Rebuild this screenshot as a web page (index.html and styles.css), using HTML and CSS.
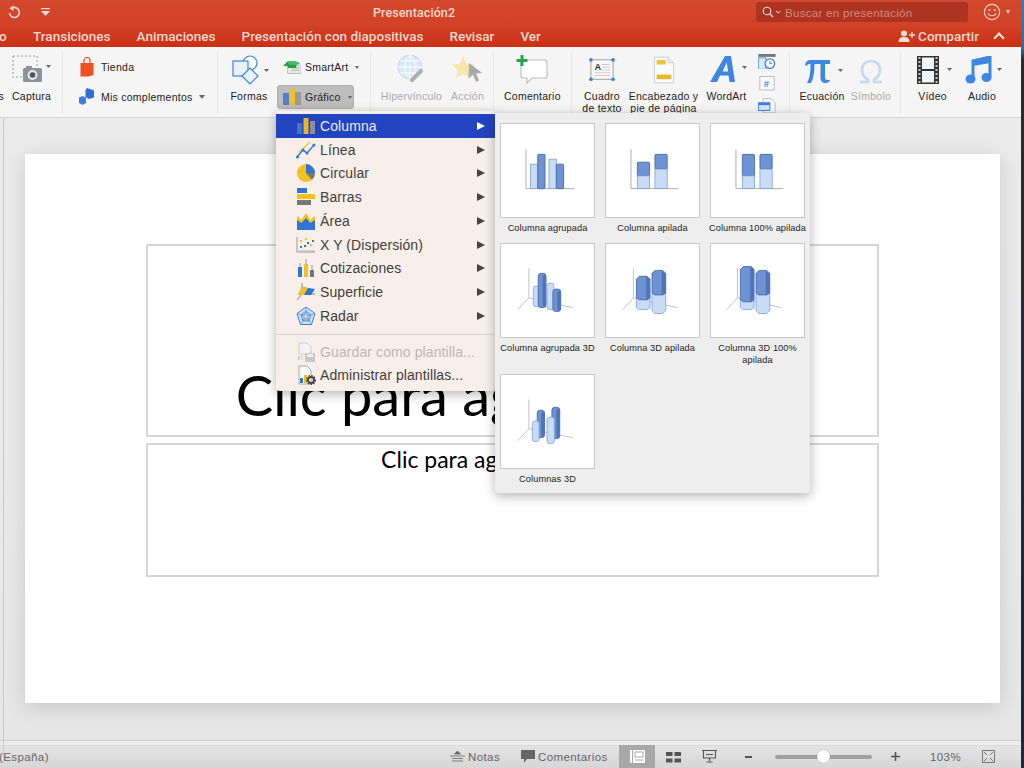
FILE: index.html
```html
<!DOCTYPE html>
<html lang="es">
<head>
<meta charset="utf-8">
<title>Presentación2</title>
<link rel="stylesheet" href="styles.css">
</head>
<body>
<div class="screen">
<div class="window">
  <header class="titlebar">
    <svg class="undo" viewBox="0 0 14 14" width="14" height="14"><path d="M4.200 3.600A5 5 0 1 1 2.400 8" fill="none" stroke="#f5d8d0" stroke-width="1.700"/><path d="M6.600 0.400V6L2.400 3.200z" fill="#f5d8d0"/></svg>
    <svg class="qat" viewBox="0 0 9 8" width="9" height="8"><path d="M0 0h9v1.200H0z M0 3h9L4.500 8z" fill="#f5d8d0"/></svg>
    <div class="doc-title">Presentación2</div>
    <div class="search">
      <svg viewBox="0 0 20 12" width="20" height="12"><circle cx="5" cy="5" r="3.800" fill="none" stroke="#f6e3dd" stroke-width="1.100"/><path d="M8 8l3 3" stroke="#f6e3dd" stroke-width="1.200"/><path d="M14 5l2.200 2 2.200-2" fill="none" stroke="#f6e3dd"/></svg>
      <span>Buscar en presentación</span>
    </div>
    <svg class="smile" viewBox="0 0 18 18" width="18" height="18"><circle cx="9" cy="9" r="7.600" fill="none" stroke="#f3cfc5" stroke-width="1.200"/><circle cx="6.400" cy="7" r="1" fill="#f3cfc5"/><circle cx="11.600" cy="7" r="1" fill="#f3cfc5"/><path d="M5 10.400c1 3.200 7 3.200 8 0" fill="none" stroke="#f3cfc5" stroke-width="1.100"/></svg>
    <span class="tri light"></span>
  </header>

  <nav class="tabs">
    <span class="tab-cut">o</span>
    <span class="tab">Transiciones</span>
    <span class="tab">Animaciones</span>
    <span class="tab">Presentación con diapositivas</span>
    <span class="tab">Revisar</span>
    <span class="tab">Ver</span>
    <div class="tab-end">
      <span class="share">
        <svg viewBox="0 0 18 12" width="18" height="12"><circle cx="6" cy="3.400" r="3" fill="#f6dcd4"/><path d="M0.500 12c0-4 2.400-5 5.500-5s5.500 1 5.500 5z" fill="#f6dcd4"/><path d="M11 5h6M14 2v6" stroke="#f6dcd4" stroke-width="1.400"/></svg>
        Compartir
      </span>
      <span class="chevron"></span>
    </div>
  </nav>

  <section class="ribbon">
    <div class="group g1">
      <div class="tool cut"><div class="ic"></div><span>s</span></div>
      <div class="tool w39">
        <div class="ic">
          <svg viewBox="0 0 40 30" width="40" height="30"><rect x="1" y="1" width="24" height="21" fill="none" stroke="#9a9a9a" stroke-dasharray="2 2"/><rect x="11" y="13" width="19" height="14" rx="1.500" fill="#8d9199"/><rect x="14" y="11" width="6" height="3" fill="#8d9199"/><circle cx="20.500" cy="20" r="5" fill="#e4e6ea"/><circle cx="20.500" cy="20" r="2.800" fill="#50545c"/><path d="M34 10h5l-2.500 3z" fill="#666"/></svg>
        </div>
        <span>Captura</span>
      </div>
    </div>

    <div class="group g2">
      <div class="rows">
        <div class="row">
          <svg class="r-ic" viewBox="0 0 16 20" width="16" height="20"><path d="M1.500 6h13v12l-5 1.500H1.500z" fill="#f04e23"/><path d="M5 7V3.500a3 3 0 0 1 6 0V7" fill="none" stroke="#f04e23" stroke-width="1.200"/></svg>
          <span>Tienda</span>
        </div>
        <div class="row">
          <svg class="r-ic" viewBox="0 0 16 18" width="16" height="18"><path d="M8 0l7 2.500v7L10 11 6.500 9V2z" fill="#2f6fd0"/><path d="M0 9.500L3.500 8l3.500 1.500V15l-3.500 2L0 15z" fill="#3b80e0"/></svg>
          <span>Mis complementos</span>
          <span class="tri"></span>
        </div>
      </div>
    </div>

    <div class="group g3">
      <div class="tool w38">
        <div class="ic">
          <svg viewBox="-4 0 42 30" width="42" height="30"><circle cx="18" cy="8" r="7" fill="#fff" stroke="#3c85e0" stroke-width="1.200"/><rect x="1" y="6" width="15" height="15" fill="#eaf2fd" stroke="#3c85e0" stroke-width="1.200"/><path d="M18 13l8 8-8 8-8-8z" fill="#eaf2fd" stroke="#3c85e0" stroke-width="1.200"/><path d="M32 14h5l-2.500 3z" fill="#666"/></svg>
        </div>
        <span>Formas</span>
      </div>
      <div class="rows r3">
        <div class="row small">
          <svg class="r-ic" viewBox="0 0 19 14" width="18" height="14"><rect x="5" y="5" width="14" height="9" fill="#e9e9e9" stroke="#aaa" stroke-width=".7"/><path d="M9 8h8M9 10.500h8" stroke="#999" stroke-width=".7"/><path d="M0 6l5-5h8l5 2-4 2v3H5V6z" fill="#22a247"/><path d="M5 1h8l5 2-4 1.500H6z" fill="#4cbc6a"/></svg>
          <span>SmartArt</span>
          <span class="tri gap3"></span>
        </div>
        <div class="row small pressed">
          <svg class="r-ic" viewBox="0 0 18 16" width="18" height="16"><rect x="0" y="4" width="6.500" height="12" rx="1" fill="#4a82cc"/><rect x="6" y="0" width="6" height="16" fill="#f0c02a"/><rect x="12" y="3" width="6" height="13" rx="1" fill="#999"/></svg>
          <span>Gráfico</span>
          <span class="tri gap3"></span>
        </div>
      </div>
    </div>

    <div class="group g4">
      <div class="tool off w63">
        <div class="ic">
          <svg viewBox="0 0 32 30" width="32" height="30"><circle cx="14" cy="12" r="12" fill="#dbe7f8" stroke="#c5d7ef"/><path d="M14 0v24M2 12h24M4 6h20M4 18h20M14 0c-7 6-7 18 0 24M14 0c7 6 7 18 0 24" fill="none" stroke="#fff"/><path d="M16 25l4-4M21 20l4-4" stroke="#aeaeae" stroke-width="4" stroke-linecap="round"/></svg>
        </div>
        <span>Hipervínculo</span>
      </div>
      <div class="tool off w33">
        <div class="ic">
          <svg viewBox="0 0 32 30" width="32" height="30"><path d="M11 1l3.400 7.600 8 .8-6 5.400 1.700 8L11 19l-7 4 1.700-8-6-5.400 8-.8z" fill="#f8e7a8"/><path d="M17 8l13 10-6 .5 3 7-3 1.300-3-7-4.500 4z" fill="#a9a9a9"/></svg>
        </div>
        <span>Acción</span>
      </div>
    </div>

    <div class="group g5">
      <div class="tool">
        <div class="ic">
          <svg viewBox="0 0 32 30" width="32" height="30"><path d="M5 5h24a2 2 0 0 1 2 2v14a2 2 0 0 1-2 2H16l-5 5v-5H7a2 2 0 0 1-2-2z" fill="#fff" stroke="#bbb" stroke-width="1.100"/><path d="M6 0v11M0.500 5.500h11" stroke="#24a84a" stroke-width="3"/></svg>
        </div>
        <span>Comentario</span>
      </div>
    </div>

    <div class="group g6">
      <div class="tool w38">
        <div class="ic">
          <svg class="lower" viewBox="0 0 28 26" width="28" height="24"><rect x="2" y="2" width="24" height="21" fill="#fafafa" stroke="#9a9a9a"/><circle cx="2" cy="2" r="2" fill="#3a82e0"/><circle cx="26" cy="2" r="2" fill="#3a82e0"/><circle cx="2" cy="23" r="2" fill="#3a82e0"/><circle cx="26" cy="23" r="2" fill="#3a82e0"/><text x="6" y="13" class="svg-a">A</text><path d="M14 7h9M14 10h9M14 13h9M6 16h17M6 19h17" stroke="#bbb" stroke-width=".8"/></svg>
        </div>
        <span>Cuadro<br>de texto</span>
      </div>
      <div class="tool w69">
        <div class="ic">
          <svg viewBox="0 0 24 30" width="22" height="30"><path d="M1.500 1h15l6 6v22h-21z" fill="#fbfbfb" stroke="#c9c9c9"/><path d="M16.500 1v6h6" fill="#eee" stroke="#c9c9c9"/><rect x="4" y="4" width="10" height="5" fill="#f0c33c"/><rect x="4" y="20" width="16" height="5" fill="#e7b92f"/></svg>
        </div>
        <span>Encabezado y<br>pie de página</span>
      </div>
      <div class="tool w41">
        <div class="ic">
          <svg viewBox="-3 0 44 28" width="44" height="28"><path d="M2 27L17 1h6l4 26h-5.500l-1-6.500h-8.500L9 27z M14.500 16.500h5.500l-1.300-9z" fill="#3d86e4" fill-rule="evenodd"/><path d="M34 11h5l-2.500 3z" fill="#666"/></svg>
        </div>
        <span>WordArt</span>
      </div>
      <div class="minis">
        <svg viewBox="0 0 18 16" width="18" height="16"><rect width="18" height="3" fill="#777"/><path d="M0 4h8v12H0z" fill="#dbe8fa" stroke="#3a82e0" stroke-width=".8"/><circle cx="12" cy="10" r="5" fill="#fff" stroke="#3a82e0" stroke-width="1.300"/><path d="M12 7v3h2.500" fill="none" stroke="#3a82e0"/></svg>
        <svg viewBox="0 0 16 15" width="16" height="15"><rect x=".5" y=".5" width="15" height="14" fill="#fafafa" stroke="#bbb"/><text x="4.500" y="11" class="svg-hash">#</text></svg>
        <svg viewBox="0 0 18 16" width="18" height="16"><path d="M5 .5h8l4.500 4.500v10.500H5z" fill="#fafafa" stroke="#bbb"/><rect x="0" y="5" width="12" height="8" fill="#dbe8fa" stroke="#3a82e0"/><rect x="0" y="5" width="12" height="2.500" fill="#3a82e0"/></svg>
      </div>
    </div>

    <div class="group g7">
      <div class="tool w44">
        <div class="ic">
          <svg class="lower" viewBox="-2 0 44 26" width="44" height="26"><path d="M3 7C4 3 6 2 9 2h19v4h-5v13c0 2 .5 3 2.500 3H28c-.5 2-2 3-4.500 3-3 0-5-1.500-5-5V6h-6c0 8-1 15-3.500 19H5c3-5 3.500-12 3.500-19C6.500 6 5 6.500 4.500 8z" fill="#3d86e4"/><path d="M36 11h5l-2.500 3z" fill="#666"/></svg>
        </div>
        <span>Ecuación</span>
      </div>
      <div class="tool off w40">
        <div class="ic">
          <svg class="lower" viewBox="0 0 26 26" width="26" height="26"><path d="M2 24h8v-2.500C6 19.500 4 16 4 12 4 6.500 8 3 13 3s9 3.500 9 9c0 4-2 7.500-6 9.500V24h8" fill="none" stroke="#c3d8f3" stroke-width="2.600"/></svg>
        </div>
        <span>Símbolo</span>
      </div>
    </div>

    <div class="group g8">
      <div class="tool w41">
        <div class="ic">
          <svg class="up" viewBox="-4 0 42 28" width="42" height="28"><rect x="1" y="0" width="22" height="28" fill="#333"/><rect x="6" y="1.500" width="12" height="11.500" fill="#eef4fd"/><rect x="6" y="15" width="12" height="11.500" fill="#eef4fd"/><path d="M2.500 2h2M2.500 6h2M2.500 10h2M2.500 14h2M2.500 18h2M2.500 22h2M2.500 26h2M19.500 2h2M19.500 6h2M19.500 10h2M19.500 14h2M19.500 18h2M19.500 22h2M19.500 26h2" stroke="#fff" stroke-width="1.500"/><path d="M31 12h5l-2.500 3z" fill="#666"/></svg>
        </div>
        <span>Vídeo</span>
      </div>
      <div class="tool w42">
        <div class="ic">
          <svg class="up" viewBox="-4 0 42 28" width="42" height="28"><path d="M8 21V5L25 1v20" fill="none" stroke="#3d86e4" stroke-width="3"/><path d="M8 5L25 1v6L8 10z" fill="#3d86e4"/><ellipse cx="5.500" cy="23" rx="5" ry="4.500" fill="#3d86e4"/><ellipse cx="21.500" cy="21.500" rx="5" ry="4.500" fill="#3d86e4"/><path d="M32 12h5l-2.500 3z" fill="#666"/></svg>
        </div>
        <span>Audio</span>
      </div>
    </div>
  </section>

  <main class="workspace">
    <div class="slide">
      <div class="ph ph-title">Clic para agregar título</div>
      <div class="ph ph-sub">Clic para agregar subtítulo</div>
    </div>
  </main>

  <footer class="status">
    <span class="lang">(España)</span>
    <span class="st notas">
      <svg viewBox="0 0 15 12" width="15" height="12"><path d="M4.500 3L7.500 0l3 3z M0 5h15M2 7.500h11M2 10h11" fill="#666" stroke="#666" stroke-width=".8"/></svg>
      Notas
    </span>
    <span class="st comm">
      <svg viewBox="0 0 14 13" width="14" height="13"><path d="M0 0h14v9H6l-3 4V9H0z" fill="#666"/></svg>
      Comentarios
    </span>
    <span class="view on"><svg viewBox="0 0 15 13" width="15" height="13"><rect width="15" height="13" rx="1" fill="#fff"/><rect x="2" y="0" width="1" height="13" fill="#a8a8a8"/><rect x="5" y="2" width="8" height="5" fill="none" stroke="#a8a8a8"/><rect x="5" y="9.500" width="8" height="1" fill="#a8a8a8"/></svg></span>
    <span class="view"><svg viewBox="0 0 15 12" width="15" height="12"><path d="M0 1h6.500v4H0zM8.500 1H15v4H8.500zM0 7.500h6.500v4H0zM8.500 7.500H15v4H8.500z" fill="#555"/></svg></span>
    <span class="view"><svg viewBox="0 0 15 13" width="15" height="13"><path d="M0 .5h15M1.500 1v7h12V1M7.500 8v3M4.500 12h6M4 4.500h7" fill="none" stroke="#555" stroke-width="1.100"/></svg></span>
    <span class="zoom-minus"></span>
    <span class="slider"><span class="thumb"></span></span>
    <svg class="zoom-plus" viewBox="0 0 9 9" width="9" height="9"><path d="M4.500 0v9M0 4.500h9" stroke="#555" stroke-width="1.600"/></svg>
    <span class="pct">103%</span>
    <svg class="fit" viewBox="0 0 13 13" width="13" height="13"><rect x=".5" y=".5" width="12" height="12" fill="none" stroke="#777"/><path d="M2 2l3 3M11 2L8 5M2 11l3-3M11 11L8 8" stroke="#777"/></svg>
  </footer>

  <div class="menu">
    <div class="item sel"><svg viewBox="0 0 18 16" width="18" height="16"><rect y="5" width="5" height="11" fill="#3f77c9"/><rect x="6.500" width="5" height="16" fill="#e7b62a"/><rect x="13" y="3" width="5" height="13" fill="#8a8f99"/></svg><span>Columna</span><i></i></div>
    <div class="item"><svg viewBox="0 0 20 18" width="20" height="18"><path d="M1 16l6-7 4 3 7-8" fill="none" stroke="#2f76d2" stroke-width="1.300"/><path d="M3 11l9-8 2-2" fill="none" stroke="#f5c022" stroke-width="1.300"/><circle cx="1.500" cy="16" r="1.500" fill="#2f76d2"/><circle cx="7" cy="9" r="1.500" fill="#2f76d2"/><circle cx="11" cy="12" r="1.500" fill="#2f76d2"/><circle cx="18" cy="4" r="1.500" fill="#2f76d2"/></svg><span>Línea</span><i></i></div>
    <div class="item"><svg viewBox="0 0 20 18" width="20" height="18"><circle cx="10" cy="9" r="9" fill="#f5c022"/><path d="M10 9V0a9 9 0 0 1 9 9z" fill="#2f76d2"/><path d="M10 9h9a9 9 0 0 1-3 6.700z" fill="#777"/></svg><span>Circular</span><i></i></div>
    <div class="item"><svg viewBox="0 0 20 18" width="20" height="18"><rect x="1" y="0" width="10" height="5" fill="#2f76d2"/><rect x="1" y="6" width="18" height="5" fill="#f5c022"/><rect x="1" y="12" width="14" height="5" fill="#777"/></svg><span>Barras</span><i></i></div>
    <div class="item"><svg viewBox="0 0 20 18" width="20" height="18"><path d="M1 4l4.500 4L10 1l4.500 7L19 4v14H1z" fill="#f5c022"/><path d="M1 8l4.500 3L10 6l4.500 5L19 8v10H1z" fill="#2f76d2"/></svg><span>Área</span><i></i></div>
    <div class="item"><svg viewBox="0 0 20 18" width="20" height="18"><path d="M1 1v15h18" fill="none" stroke="#999"/><path d="M3 15h16" stroke="#bbb"/><g fill="#f5c022"><rect x="4" y="4" width="2" height="2"/><rect x="9" y="2" width="2" height="2"/><rect x="14" y="8" width="2" height="2"/></g><g fill="#2f76d2"><rect x="4" y="10" width="2" height="2"/><rect x="11" y="6" width="2" height="2"/><rect x="16" y="4" width="2" height="2"/><rect x="8" y="9" width="2" height="2"/></g></svg><span>X Y (Dispersión)</span><i></i></div>
    <div class="item"><svg viewBox="0 0 20 18" width="20" height="18"><rect x="2" y="8" width="4" height="10" fill="#2f76d2"/><path d="M4 4v4" stroke="#999"/><rect x="8" y="5" width="4" height="13" fill="#f5c022"/><path d="M10 0v5" stroke="#999"/><rect x="14" y="11" width="4" height="7" fill="#777"/><path d="M16 6v5" stroke="#999"/></svg><span>Cotizaciones</span><i></i></div>
    <div class="item"><svg viewBox="0 0 20 18" width="20" height="18"><path d="M6 0v11L1 17" fill="none" stroke="#888"/><path d="M6 11h13" stroke="#888"/><path d="M6 4l13 2-4 6H2z" fill="#2f76d2"/><path d="M6 4l6 1-4 7H2z" fill="#f5c022"/></svg><span>Superficie</span><i></i></div>
    <div class="item"><svg viewBox="0 0 20 18" width="20" height="18"><path d="M10 0l9 6.500-3.500 11h-11L1 6.500z" fill="#cfe0f6" stroke="#3f7fd4"/><path d="M10 4l5 4-2 6H7L5 8z" fill="#9bbfee" stroke="#3f7fd4" stroke-width=".7"/><path d="M10 0v9M1 6.500L10 9l9-2.500M4.500 17.500L10 9l5.500 8.500" fill="none" stroke="#3f7fd4" stroke-width=".6"/><path d="M10 7l2.500 3.500h-5z" fill="#e9d9a5"/></svg><span>Radar</span><i></i></div>
    <div class="sep"></div>
    <div class="item dim"><svg viewBox="0 0 20 20" width="20" height="20"><path d="M3 1h8l4 4v7H3z" fill="#f3f3f3" stroke="#ccc"/><rect x="9" y="11" width="10" height="9" fill="#c9c9c9"/><rect x="11" y="12" width="6" height="3" fill="#eee"/><rect x="2" y="14" width="2" height="4" fill="#bcd2ee"/><rect x="5" y="12" width="2" height="6" fill="#f3e1a5"/></svg><span>Guardar como plantilla...</span></div>
    <div class="item"><svg viewBox="0 0 20 20" width="20" height="20"><path d="M3 1h8l4 4v14H3z" fill="#fbfbfb" stroke="#aaa"/><rect x="4" y="13" width="3" height="5" fill="#2f76d2"/><rect x="8" y="10" width="3" height="8" fill="#f5c022"/><circle cx="15" cy="15" r="3" fill="none" stroke="#444" stroke-width="2"/><circle cx="15" cy="15" r="4.500" fill="none" stroke="#444" stroke-width="1.200" stroke-dasharray="1.500 1.500"/></svg><span>Administrar plantillas...</span></div>
  </div>

  <div class="gallery">
    <figure class="cell">
      <svg class="thumbnail" viewBox="0 0 95 95">
        <path class="ax" d="M25.500 26v40M25.500 66H75"/>
        <rect class="lt" x="30" y="41" width="7.500" height="25"/><rect class="dk" x="37.500" y="31" width="7.500" height="35" rx="1"/>
        <rect class="lt" x="49" y="36" width="7.500" height="30"/><rect class="dk" x="56.500" y="41" width="7.500" height="25" rx="1"/>
      </svg>
      <figcaption>Columna agrupada</figcaption>
    </figure>
    <figure class="cell">
      <svg class="thumbnail" viewBox="0 0 95 95">
        <path class="ax" d="M25.500 26v40M25.500 66H74"/>
        <rect class="dk" x="32" y="39" width="12.500" height="14" rx="1"/><rect class="lt" x="32" y="53" width="12.500" height="13"/>
        <rect class="dk" x="50" y="31" width="12.500" height="15" rx="1"/><rect class="lt" x="50" y="46" width="12.500" height="20"/>
      </svg>
      <figcaption>Columna apilada</figcaption>
    </figure>
    <figure class="cell">
      <svg class="thumbnail" viewBox="0 0 95 95">
        <path class="ax" d="M25.500 26v40M25.500 66H74"/>
        <rect class="dk" x="32" y="31" width="12.500" height="22" rx="1"/><rect class="lt" x="32" y="53" width="12.500" height="13"/>
        <rect class="dk" x="50" y="31" width="12.500" height="15" rx="1"/><rect class="lt" x="50" y="46" width="12.500" height="20"/>
      </svg>
      <figcaption>Columna 100% apilada</figcaption>
    </figure>
    <figure class="cell">
      <svg class="thumbnail" viewBox="0 0 95 95">
        <path class="ax3" d="M28.500 25v30M28.500 55L17 67M28.500 55L73 65"/>
        <rect class="lt" x="33" y="43" width="7" height="21" rx="2.500"/>
        <rect class="dk" x="38" y="30" width="8" height="35" rx="3"/><rect class="dk2" x="42.500" y="32" width="3.500" height="32" rx="1.500"/>
        <rect class="lt" x="47" y="40" width="7" height="27" rx="2.500"/>
        <rect class="dk" x="53" y="46" width="8" height="23" rx="3"/><rect class="dk2" x="57.500" y="48" width="3.500" height="20" rx="1.500"/>
      </svg>
      <figcaption>Columna agrupada 3D</figcaption>
    </figure>
    <figure class="cell">
      <svg class="thumbnail" viewBox="0 0 95 95">
        <path class="ax3" d="M28 25v30M28 55L17 67M28 55L73 65"/>
        <path class="lt" d="M31 55h14v10l-3 2H34l-3-2z"/><path class="dk" d="M31 36l3-3 8 0 3 3v19l-3 2H34l-3-2z"/><path class="dk2" d="M41 34h1l3 2v19l-3 2h-1z"/>
        <path class="lt" d="M47 50h14v18l-3 3h-8l-3-3z"/><path class="dk" d="M47 30l3-3 8 0 3 3v20l-3 2H50l-3-2z"/><path class="dk2" d="M57 28h1l3 2v20l-3 2h-1z"/>
      </svg>
      <figcaption>Columna 3D apilada</figcaption>
    </figure>
    <figure class="cell">
      <svg class="thumbnail" viewBox="0 0 95 95">
        <path class="ax3" d="M27 25v30M27 55L16 67M27 55L72 65"/>
        <path class="lt" d="M30 57h14v8l-3 2h-8l-3-2z"/><path class="dk" d="M30 26l3-3 8 0 3 3v31l-3 2H33l-3-2z"/><path class="dk2" d="M40 24h1l3 2v31l-3 2h-1z"/>
        <path class="lt" d="M46 50h14v18l-3 3h-8l-3-3z"/><path class="dk" d="M46 30l3-3 8 0 3 3v20l-3 2H49l-3-2z"/><path class="dk2" d="M56 28h1l3 2v20l-3 2h-1z"/>
      </svg>
      <figcaption>Columna 3D 100% apilada</figcaption>
    </figure>
    <figure class="cell">
      <svg class="thumbnail" viewBox="0 0 95 95">
        <path class="ax3" d="M28.500 25v30M28.500 55L17 67M28.500 55L73 64"/>
        <rect class="dk" x="37" y="36" width="7.500" height="28" rx="3"/><rect class="dk2" x="41" y="38" width="3.500" height="25" rx="1.500"/>
        <rect class="dk" x="52" y="33" width="8" height="32" rx="3"/><rect class="dk2" x="56.500" y="35" width="3.500" height="29" rx="1.500"/>
        <rect class="lt" x="32" y="47" width="7" height="21" rx="2.500"/>
        <rect class="lt" x="47" y="43" width="7.500" height="27" rx="2.500"/>
      </svg>
      <figcaption>Columnas 3D</figcaption>
    </figure>
  </div>
</div>
<div class="desktop"></div>
</div>
</body>
</html>
```

FILE: styles.css
```css
* { box-sizing: border-box; }
html, body { margin: 0; padding: 0; }
body { font-family: "Liberation Sans", Arial, sans-serif; color: #333; }
.screen { width: 1024px; height: 768px; display: flex; overflow: hidden; }
.window { position: relative; width: 1021px; height: 768px; display: flex; flex-direction: column; overflow: hidden; }
.desktop { flex: 1; background: linear-gradient(#2f7fb8 0, #2d6f9c 48px, #2b2b2b 60px, #1c2a3a 768px); }

.titlebar { height: 24px; flex: none; display: flex; align-items: center; background: linear-gradient(#d2492e, #d24327); }
.undo { margin-left: 7px; }
.qat { margin-left: 20px; }
.doc-title { margin-left: 323px; font: 500 12.5px Roboto, sans-serif; letter-spacing: .1px; color: #f4d6ce; }
.search { margin-left: auto; width: 212px; height: 20px; display: flex; align-items: center; gap: 3px; padding-left: 6px; border-radius: 3px; background: #ad3423; color: #d5877a; font: 400 11.5px "Liberation Sans", sans-serif; letter-spacing: .3px; }
.search span { padding-top: 1px; }
.smile { margin-left: 15px; }
.tri { display: inline-block; flex: none; width: 0; height: 0; border-left: 3px solid transparent; border-right: 3px solid transparent; border-top: 4px solid #666; }
.tri.light { margin-left: 5px; margin-right: 11px; border-top-color: #f3cfc5; border-left-width: 2.5px; border-right-width: 2.5px; }
.gap3 { margin-left: 3px; }

.tabs { height: 23px; flex: none; display: flex; align-items: center; gap: 26px; padding-top: 1px; background: linear-gradient(#d24327, #cb2f13); color: #f6d8d0; font: 500 13.55px Roboto, sans-serif; white-space: nowrap; }
.tab-cut { margin-left: -1px; width: 8px; }
.tab-end { margin-left: auto; margin-right: 18px; margin-top: -1px; display: flex; align-items: center; gap: 16px; }
.share { display: flex; align-items: center; gap: 2px; font-size: 13.5px; }
.chevron { flex: none; display: block; width: 8px; height: 8px; margin-top: 5px; border-top: 2px solid #fbe5df; border-left: 2px solid #fbe5df; transform: rotate(45deg); }

.ribbon { height: 71px; flex: none; display: flex; background: #f5f5f5; border-bottom: 1px solid #d4d4d4; font-size: 10.5px; letter-spacing: .25px; color: #222; }
.group { flex: none; height: 62px; margin-top: 4px; display: flex; border-right: 1px solid #e6e6e6; }
.g1 { width: 63px; }
.g2 { width: 155px; padding-left: 16px; }
.g3 { width: 153px; padding-left: 12px; gap: 9px; }
.g4 { width: 123px; padding-left: 9px; gap: 8px; }
.g5 { width: 78px; padding-left: 10px; }
.g6 { width: 218px; padding-left: 11px; gap: 8px; }
.g7 { width: 111px; padding-left: 10px; gap: 7px; }
.g8 { width: 120px; padding-left: 11px; gap: 8px; border-right: 0; }

.tool { display: flex; flex-direction: column; align-items: center; text-align: center; white-space: nowrap; line-height: 12px; }
.tool .ic { flex: none; height: 39px; padding-top: 4px; display: flex; justify-content: center; }
.tool.off { color: #aaa; }
.lower { margin-top: 3px; }
.up { margin-top: 1px; }
.cut { width: 4px; margin-right: 8px; overflow: hidden; align-items: flex-end; }
.cut span { margin-left: -4px; }
.w33 { width: 33px; } .w38 { width: 38px; } .w39 { width: 39px; } .w40 { width: 40px; }
.w41 { width: 41px; } .w42 { width: 42px; } .w44 { width: 44px; } .w63 { width: 63px; } .w69 { width: 69px; }

.rows { display: flex; flex-direction: column; gap: 6px; padding-top: 4px; white-space: nowrap; }
.row { flex: none; height: 24px; display: flex; align-items: center; gap: 6px; }
.small { gap: 4px; padding-left: 6px; }
.small .tri { border-left-width: 2.5px; border-right-width: 2.5px; border-top-width: 3px; }
.pressed { width: 77px; border-radius: 3px; background: #bdbdbd; border: 1px solid #adadad; padding-left: 5px; }
.minis { display: flex; flex-direction: column; align-items: center; width: 18px; margin-left: 3px; gap: 7px; padding-top: 3px; }
.svg-a { font: 700 10px "Liberation Sans", sans-serif; fill: #333; }
.svg-hash { font: 700 10px "Liberation Sans", sans-serif; fill: #3a82e0; }

.workspace { flex: none; height: 623px; padding: 36px 0 0 25px; background: linear-gradient(#ebebeb, #eaeaea 60%, #e6e6e6); border-bottom: 1px solid #cfcfcf; position: relative; }
.workspace::before { content: ""; position: absolute; left: 3px; top: 0; height: 640px; border-left: 1px solid #c9c9c9; }
.slide { width: 975px; height: 549px; background: #fff; padding: 90px 0 0 121px; box-shadow: 0 4px 20px rgba(0,0,0,.14); font-family: Lato, sans-serif; color: #000; }
.ph { width: 733px; border: 2px solid #d6d6d6; text-align: center; }
.ph-title { height: 193px; display: flex; align-items: flex-end; justify-content: center; font-size: 56px; line-height: 60px; padding-bottom: 10px; }
.ph-sub { height: 134px; margin-top: 6px; font-size: 23px; line-height: 28px; }

.status { flex: none; height: 27px; padding-top: 4px; display: flex; align-items: center; background: linear-gradient(#ededed 0, #ededed 4px, #cfcfcf 4px, #e4e4e4 5px, #d6d6d6 100%); color: #666; font-size: 11.5px; letter-spacing: .4px; white-space: nowrap; }
.lang { margin-left: -1px; width: 451px; }
.st { display: flex; align-items: center; gap: 3px; }
.notas { width: 71px; }
.comm { width: 98px; }
.view { width: 36px; height: 23px; display: flex; align-items: center; justify-content: center; }
.view.on { background: #a8a8a8; }
.zoom-minus { width: 7px; height: 2px; margin-left: 18px; background: #555; }
.slider { position: relative; width: 97px; height: 4px; margin-left: 23px; border-radius: 2px; background: #a0a0a0; }
.thumb { position: absolute; left: 42px; top: -5px; width: 13px; height: 13px; border-radius: 50%; background: #fff; box-shadow: 0 0 1px rgba(0,0,0,.4); }
.zoom-plus { margin-left: 19px; }
.pct { margin-left: 30px; }
.fit { margin-left: 21px; }

.menu { position: absolute; left: 276px; top: 111px; width: 219px; height: 280px; padding-top: 3px; background: #f8efeb; border-radius: 0 0 4px 4px; box-shadow: 0 3px 12px rgba(0,0,0,.3); font-size: 14px; letter-spacing: .1px; color: #443d3b; }
.item { height: 23.75px; display: flex; align-items: center; padding-left: 20px; }
.item svg { width: 20px; flex: none; margin-right: 4px; }
.item i { margin-left: auto; margin-right: 10px; width: 0; height: 0; border-left: 8px solid #4a4240; border-top: 4.5px solid transparent; border-bottom: 4.5px solid transparent; }
.item.sel { background: #2244c0; color: #f0e9f4; }
.item.sel i { border-left-color: #fff; }
.item.dim { color: #bdb7b4; }
.sep { height: 1px; margin: 6px 0 5px; background: #dcd6d2; }

.gallery { position: absolute; left: 495px; top: 113px; width: 315px; height: 380px; padding: 10px 5px 0; display: grid; grid-template-columns: repeat(3, 95px); grid-template-rows: 110.5px 121.5px 111px; gap: 9.5px 10px; align-content: start; background: #eeeeee; border-radius: 0 4px 4px 4px; box-shadow: 0 3px 12px rgba(0,0,0,.3); font-size: 9.2px; letter-spacing: .1px; color: #222; }
.cell { margin: 0; display: flex; flex-direction: column; align-items: center; text-align: center; }
.cell figcaption { margin-top: 3.5px; line-height: 12px; width: 110px; }
.thumbnail { flex: none; width: 95px; height: 95px; display: block; background: #fff; border: 1px solid #c8c8c8; }
.ax { fill: none; stroke: #999; stroke-width: .8; }
.ax3 { fill: none; stroke: #c2c2c2; stroke-width: 1; }
.lt { fill: #c8dcf6; stroke: #7c9fd8; stroke-width: .8; }
.dk { fill: #6d93d4; stroke: #3f5f9c; stroke-width: .8; }
.dk2 { fill: #4f74b8; }
```
